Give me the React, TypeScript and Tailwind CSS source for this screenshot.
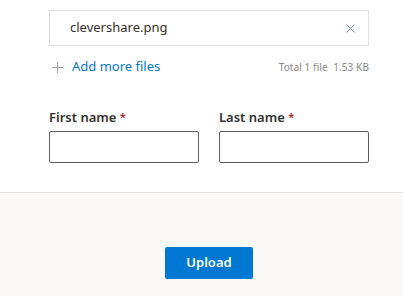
import React from 'react';

export default function App() {
  return (
    <div className="w-[403px] h-[296px] flex flex-col bg-white overflow-hidden" style={{ fontFamily: '"Segoe UI", "Noto Sans", sans-serif' }}>
      <div className="pl-[49px] pt-[10px] h-[192px] shrink-0">
        <div className="w-[320px]">
          {/* fichier sélectionné */}
          <div className="h-[36px] border border-[#e1dfdd] flex items-center justify-between pl-[20px] pr-[13px]">
            <span className="text-[13px] text-[#323130]">clevershare.png</span>
            <button className="w-[9px] h-[9px] flex items-center justify-center">
              <svg width="9" height="9" viewBox="0 0 9 9">
                <path d="M0.5 0.5 L8.5 8.5 M8.5 0.5 L0.5 8.5" stroke="#7b97d0" strokeWidth="1" />
              </svg>
            </button>
          </div>

          <div className="flex items-center justify-between mt-[10px] h-[22px]">
            <div className="flex items-center">
              <svg width="11" height="11" viewBox="0 0 11 11" className="ml-[3px] mr-[9px]">
                <path d="M5.5 0 V11 M0 5.5 H11" stroke="#a19f9d" strokeWidth="1" />
              </svg>
              <span className="text-[13px] text-[#0078d4]">Add more files</span>
            </div>
            <span className="text-[10px] text-[#8a8886] mt-[1px] tracking-[0.1px]">Total 1 file&nbsp; 1.53 KB</span>
          </div>

          <div className="grid grid-cols-2 gap-x-[20px] mt-[29px]">
            <div>
              <label className="block text-[13px] font-semibold text-[#323130] leading-[20px] mb-[4px]">
                First name <span className="text-[#a4262c] text-[11px] align-top">*</span>
              </label>
              <input type="text" className="w-[150px] h-[32px] border border-[#605e5c] rounded-[2px] px-2 outline-none" />
            </div>
            <div>
              <label className="block text-[13px] font-semibold text-[#323130] leading-[20px] mb-[4px]">
                Last name <span className="text-[#a4262c] text-[11px] align-top">*</span>
              </label>
              <input type="text" className="w-[150px] h-[32px] border border-[#605e5c] rounded-[2px] px-2 outline-none" />
            </div>
          </div>
        </div>
      </div>

      <div className="flex-1 bg-[#faf9f8] border-t border-[#e1dfdd] pl-[49px]">
        <div className="w-[320px] flex justify-center pt-[54px]">
          <button className="w-[88px] h-[32px] bg-[#0078d4] text-white text-[13px] font-semibold rounded-[2px]">
            Upload
          </button>
        </div>
      </div>
    </div>
  );
}
